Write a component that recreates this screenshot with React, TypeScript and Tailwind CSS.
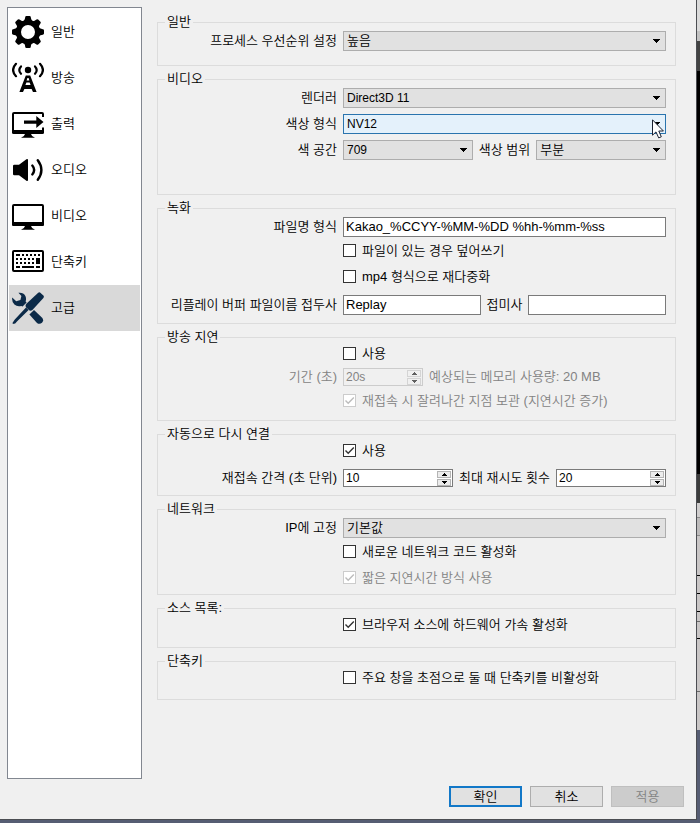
import { ReactNode, useId } from "react";

/* ---------- Icons ---------- */

const GEAR_ANGLES = [0, 45, 90, 135, 180, 225, 270, 315];

function GearIcon() {
  return (
    <svg viewBox="0 0 32 32" className="size-8 shrink-0">
      <circle cx="16" cy="16" r="9.6" fill="none" stroke="#000" strokeWidth="5.2" />
      {GEAR_ANGLES.map((angle) => (
        <path
          key={angle}
          d="M11.6 5.5 Q13 3.5 13.2 1.2 Q13.3 0 14.4 0 H17.6 Q18.7 0 18.8 1.2 Q19 3.5 20.4 5.5 Z"
          transform={`rotate(${angle} 16 16)`}
        />
      ))}
    </svg>
  );
}

function BroadcastIcon() {
  return (
    <svg viewBox="0 0 32 32" className="size-8 shrink-0">
      <circle cx="16" cy="8" r="3.2" />
      <g fill="none" stroke="#000" strokeWidth="2.2" strokeLinecap="round">
        <path d="M9 4.4 Q5.6 8 9 11.8 M23 4.4 Q26.4 8 23 11.8" />
        <path d="M4 1.8 Q-1.8 8 4 14.2 M28 1.8 Q33.8 8 28 14.2" />
      </g>
      <path
        fillRule="evenodd"
        d="M13.8 13.5 H18.2 L24.6 30 H21 L19.6 27 H12.4 L11 30 H7.4 Z M15.4 16 L14.6 18.6 H17.4 L16.6 16 Z M14.4 20.4 L13.4 23 H18.6 L17.6 20.4 Z"
      />
    </svg>
  );
}

function OutputIcon() {
  return (
    <svg viewBox="0 0 32 32" className="size-8 shrink-0">
      <path d="M31 9 V6 Q31 5 30 5 H2 Q1 5 1 6 V24 H31 V19.5" fill="none" stroke="#000" strokeWidth="2" />
      <path d="M0 22 H32 V24.5 Q32 26 30.5 26 H1.5 Q0 26 0 24.5 Z" />
      <path d="M13 26 H19 Q19.5 28.6 23 29.8 H9 Q12.5 28.6 13 26 Z" />
      <path d="M12 12.4 H24.3 V8 L31.5 14 L24.3 20 V15.8 H12 Z" />
    </svg>
  );
}

function AudioIcon() {
  return (
    <svg viewBox="0 0 32 32" className="size-8 shrink-0">
      <path d="M1 12 Q1 10.7 2.3 10.7 H7 L14.4 5.2 Q16 4.6 16 6 V26 Q16 27.4 14.4 26.8 L7 21.3 H2.3 Q1 21.3 1 20 Z" />
      <g fill="none" stroke="#000" strokeWidth="2.4" strokeLinecap="round">
        <path d="M20.3 11.6 Q24 16 20.3 20.4" />
        <path d="M25.8 6.2 Q33 16 25.8 25.8" />
      </g>
    </svg>
  );
}

function VideoIcon() {
  return (
    <svg viewBox="0 0 32 32" className="size-8 shrink-0">
      <rect x="1" y="5" width="30" height="20" rx="1" fill="none" stroke="#000" strokeWidth="2" />
      <path d="M0 22 H32 V24.5 Q32 26 30.5 26 H1.5 Q0 26 0 24.5 Z" />
      <path d="M13 26 H19 Q19.5 28.6 23 29.8 H9 Q12.5 28.6 13 26 Z" />
    </svg>
  );
}

function KeyboardIcon() {
  return (
    <svg viewBox="0 0 32 32" className="size-8 shrink-0">
      <rect x="1" y="5" width="30" height="20" rx="1" fill="none" stroke="#000" strokeWidth="2" />
      <path d="M4 8h4v2h-4z M10 8h2v2h-2z M14 8h2v2h-2z M18 8h2v2h-2z M22 8h2v2h-2z M26 8h2v2h-2z" />
      <path d="M4 12h2v2h-2z M8 12h2v2h-2z M12 12h2v2h-2z M16 12h2v2h-2z M20 12h2v2h-2z M24 12h4v6h-4z" />
      <path d="M4 16h2v2h-2z M8 16h2v2h-2z M12 16h2v2h-2z M16 16h2v2h-2z M20 16h2v2h-2z" />
      <path d="M4 20h4v2h-4z M10 20h12v2h-12z M24 20h4v2h-4z" />
    </svg>
  );
}

function ToolsIcon() {
  return (
    <svg viewBox="0 0 32 32" className="size-8 shrink-0" fill="#0b2a48">
      {/* destornillador */}
      <path d="M26.2 0.8 Q27.4 -0.2 28.6 0.9 L31.4 3.6 Q32.4 4.8 31.4 6 L20.4 18 Q18.4 19.4 16.6 17.8 L14.2 15.4 Q12.8 13.6 14.4 11.8 Z" />
      <path d="M14 15.4 L16.6 18 L5.2 29.2 L3.2 31.4 L0.8 32 L0.6 30.8 L2.8 27.6 Z" />
      {/* llave */}
      <path d="M6.4 0.8 Q11.4 0.2 13.4 4 Q14.6 6.6 13.6 9.4 L14.6 10.6 L10.6 14.6 L9.2 14 Q5.2 15 2.4 12.6 Q-0.4 10 0.2 5.6 L4.2 9.2 L8.4 8 L9.4 4 Z" />
      <path d="M17.4 22.6 L22 18 L30.4 26 Q32 28.6 30 30.8 Q27.6 32.8 25 31 Z" />
    </svg>
  );
}

/* ---------- Controls ---------- */

const TABS = [
  { label: "일반", icon: <GearIcon /> },
  { label: "방송", icon: <BroadcastIcon /> },
  { label: "출력", icon: <OutputIcon /> },
  { label: "오디오", icon: <AudioIcon /> },
  { label: "비디오", icon: <VideoIcon /> },
  { label: "단축키", icon: <KeyboardIcon /> },
  { label: "고급", icon: <ToolsIcon />, active: true },
];

function Group({ title, className, children }: { title: string; className: string; children: ReactNode }) {
  return (
    <fieldset className={`border border-[#dcdcdc] pt-px pr-[9px] ${className}`}>
      <legend className="ml-[7px] h-4 px-[2px] leading-4">{title}</legend>
      {children}
    </fieldset>
  );
}

interface RowProps {
  label?: string;
  htmlFor?: string;
  disabled?: boolean;
  children: ReactNode;
}

function Row({ label, htmlFor, disabled, children }: RowProps) {
  return (
    <div className="grid grid-cols-[179px_minmax(0,1fr)] items-center gap-x-[6px]">
      {label ? (
        <label htmlFor={htmlFor} className={`text-right whitespace-nowrap ${disabled ? "text-[#838383]" : ""}`}>
          {label}
        </label>
      ) : (
        <span />
      )}
      <div className="flex items-center gap-[6px]">{children}</div>
    </div>
  );
}

interface SelectProps {
  id: string;
  value: string;
  hot?: boolean;
  className?: string;
}

function Select({ id, value, hot, className = "" }: SelectProps) {
  return (
    <div className={`relative min-w-0 flex-1 ${className}`}>
      <select
        id={id}
        defaultValue={value}
        className={`block h-5 w-full appearance-none border pr-5 pb-px pl-[3px] leading-4 outline-none ${
          hot ? "border-[#2a74ae] bg-[#e4f1fb]" : "border-[#adadad] bg-[#e1e1e1]"
        }`}
      >
        <option>{value}</option>
      </select>
      <svg viewBox="0 0 7 4" className="pointer-events-none absolute top-2 right-[6px] h-1 w-[7px]">
        <path d="M0 0h7v1h-1v1h-1v1h-1v1h-1v-1h-1v-1h-1v-1h-1z" />
      </svg>
      {hot && (
        <svg viewBox="0 0 12 20" className="pointer-events-none absolute top-[5px] right-[2px] h-5 w-3">
          <path
            d="M0.5 0.8 V16.2 L4 12.9 L6.7 18.9 L9.3 17.8 L6.8 12 H11.4 Z"
            fill="#fff"
            stroke="#1a2030"
            strokeWidth="1"
          />
        </svg>
      )}
    </div>
  );
}

function TextInput({ id, value }: { id: string; value: string }) {
  return (
    <input
      id={id}
      type="text"
      defaultValue={value}
      className="h-5 w-full min-w-0 flex-1 border border-[#7a7a7a] bg-white px-[2px] pb-px leading-4 outline-none"
    />
  );
}

function SpinBox({ id, value, disabled, className }: { id: string; value: string; disabled?: boolean; className: string }) {
  const button = `flex h-[7px] items-center justify-center border ${
    disabled ? "border-[#d4d4d4] bg-[#f0f0f0]" : "border-[#b4b4b4] bg-[#ececec]"
  }`;
  const arrow = disabled ? "#606060" : "#000";

  return (
    <div
      className={`flex h-[18px] min-w-0 items-center border pr-px ${
        disabled ? "border-[#cccccc] bg-[#f0f0f0] text-[#838383]" : "border-[#7a7a7a] bg-white"
      } ${className}`}
    >
      <input
        id={id}
        type="text"
        defaultValue={value}
        disabled={disabled}
        className="h-4 w-full min-w-0 flex-1 bg-transparent px-[2px] text-xs leading-4 outline-none"
      />
      <div className="grid w-[14px] shrink-0 gap-px">
        <button type="button" aria-label="증가" disabled={disabled} className={button}>
          <svg viewBox="0 0 5 3" className="h-[3px] w-[5px]" fill={arrow}>
            <path d="M2 0h1v1h1v1h1v1h-5v-1h1v-1h1z" />
          </svg>
        </button>
        <button type="button" aria-label="감소" disabled={disabled} className={button}>
          <svg viewBox="0 0 5 3" className="h-[3px] w-[5px]" fill={arrow}>
            <path d="M0 0h5v1h-1v1h-1v1h-1v-1h-1v-1h-1z" />
          </svg>
        </button>
      </div>
    </div>
  );
}

interface CheckProps {
  label: string;
  checked?: boolean;
  disabled?: boolean;
  className?: string;
}

function Check({ label, checked, disabled, className = "h-[15px]" }: CheckProps) {
  const id = useId();
  return (
    <Row>
      <div className={className}>
        <div className="flex h-[15px] items-center gap-[6px]">
          <span className="relative block size-[13px] shrink-0">
            <input
              id={id}
              type="checkbox"
              defaultChecked={checked}
              disabled={disabled}
              className="peer block size-[13px] appearance-none border border-[#333333] bg-white disabled:border-[#cccccc]"
            />
            <svg
              viewBox="0 0 13 13"
              className="pointer-events-none absolute inset-0 hidden text-[#333333] peer-checked:block peer-disabled:text-[#bcbcbc]"
            >
              <path d="M2.5 6.5 L5.2 9.2 L10.8 3.4" fill="none" stroke="currentColor" strokeWidth="1.4" />
            </svg>
          </span>
          <label htmlFor={id} className={`whitespace-nowrap ${disabled ? "text-[#838383]" : ""}`}>
            {label}
          </label>
        </div>
      </div>
    </Row>
  );
}

/* Slice of the windows that sit behind the dialog */
function Backdrop() {
  return (
    <div className="flex w-[3px] shrink-0 flex-col">
      <div className="h-[31px] bg-[#dadada]" />
      <div className="h-[10px] bg-[#c2c2c2]" />
      <div className="h-[30px] bg-[#434343]" />
      <div className="h-[403px] bg-black" />
      <div className="h-[29px] bg-[#3c3c3c]" />
      <div className="h-[15px] border-b border-[#8a8a8a] bg-[#cfcdcd]" />
      <div className="h-[18px] border-b border-[#8a8a8a] bg-[#bdbbbb]" />
      <div className="h-[40px] border-b border-black bg-[#c9c6c6]" />
      <div className="h-[18px] border-b border-black bg-[#c9c6c6]" />
      <div className="h-[18px] border-b border-black bg-[#c9c6c6]" />
      <div className="h-[10px] border-b border-[#6a6a6a] bg-[#c9c6c6]" />
      <div className="h-[17px] border-b border-black bg-[#c9c6c6]" />
      <div className="h-[53px] border-b border-[#6a6a6a] bg-[#c9c6c6]" />
      <div className="h-[38px] bg-[#c9c6c6]" />
    </div>
  );
}

export default function App() {
  return (
    <div className="flex min-h-screen flex-col bg-[#565d73] pb-[3px] font-['Liberation_Sans','Noto_Sans_CJK_KR',sans-serif] text-[13px] leading-4 font-[350] text-black">
      <div className="flex flex-1">
        <main className="flex min-w-0 flex-1 flex-col border-r border-b border-[#4b4d52] bg-[#f0f0f0] pb-3">
          <div className="flex flex-1 pr-5">
            <nav className="mt-[7px] ml-[7px] w-[135px] shrink-0 border border-[#828790] bg-white p-px">
              {TABS.map((tab) => (
                <button
                  key={tab.label}
                  type="button"
                  className={`flex h-[46px] w-full items-center gap-[7px] pl-[3px] ${tab.active ? "bg-[#d9d9d9]" : ""}`}
                >
                  {tab.icon}
                  {tab.label}
                </button>
              ))}
            </nav>

            <form className="ml-[15px] flex min-w-0 flex-1 flex-col gap-[5px] pt-[14px]">
              <Group title="일반" className="pb-[14px]">
                <Row label="프로세스 우선순위 설정" htmlFor="priority">
                  <Select id="priority" value="높음" />
                </Row>
              </Group>

              <Group title="비디오" className="pb-[34px]">
                <div className="grid gap-[6px]">
                  <Row label="렌더러" htmlFor="renderer">
                    <Select id="renderer" value="Direct3D 11" className="text-xs" />
                  </Row>
                  <Row label="색상 형식" htmlFor="format">
                    <Select id="format" value="NV12" hot className="text-xs" />
                  </Row>
                  <Row label="색 공간" htmlFor="space">
                    <Select id="space" value="709" className="text-xs" />
                    <label htmlFor="range" className="whitespace-nowrap">색상 범위</label>
                    <Select id="range" value="부분" />
                  </Row>
                </div>
              </Group>

              <Group title="녹화" className="pb-2">
                <div className="grid gap-[6px]">
                  <Row label="파일명 형식" htmlFor="filename">
                    <TextInput id="filename" value="Kakao_%CCYY-%MM-%DD %hh-%mm-%ss" />
                  </Row>
                  <Check label="파일이 있는 경우 덮어쓰기" className="h-5" />
                  <Check label="mp4 형식으로 재다중화" className="h-5" />
                  <Row label="리플레이 버퍼 파일이름 접두사" htmlFor="prefix">
                    <TextInput id="prefix" value="Replay" />
                    <label htmlFor="suffix" className="whitespace-nowrap">접미사</label>
                    <TextInput id="suffix" value="" />
                  </Row>
                </div>
              </Group>

              <Group title="방송 지연" className="pb-3">
                <div className="grid gap-[7px]">
                  <Check label="사용" />
                  <Row label="기간 (초)" htmlFor="delay" disabled>
                    <SpinBox id="delay" value="20s" disabled className="w-20" />
                    <span className="whitespace-nowrap text-[#838383]">예상되는 메모리 사용량: 20 MB</span>
                  </Row>
                  <Check label="재접속 시 잘려나간 지점 보관 (지연시간 증가)" checked disabled />
                </div>
              </Group>

              <Group title="자동으로 다시 연결" className="pb-2">
                <div className="grid gap-[11px]">
                  <Check label="사용" checked />
                  <Row label="재접속 간격 (초 단위)" htmlFor="retry">
                    <SpinBox id="retry" value="10" className="flex-1" />
                    <label htmlFor="retries" className="whitespace-nowrap">최대 재시도 횟수</label>
                    <SpinBox id="retries" value="20" className="flex-1" />
                  </Row>
                </div>
              </Group>

              <Group title="네트워크" className="pb-1">
                <div className="grid gap-[6px]">
                  <Row label="IP에 고정" htmlFor="bind">
                    <Select id="bind" value="기본값" />
                  </Row>
                  <Check label="새로운 네트워크 코드 활성화" className="h-5" />
                  <Check label="짧은 지연시간 방식 사용" checked disabled className="h-5" />
                </div>
              </Group>

              <Group title="소스 목록:" className="pb-[15px]">
                <Check label="브라우저 소스에 하드웨어 가속 활성화" checked />
              </Group>

              <Group title="단축키" className="pb-[14px]">
                <Check label="주요 창을 초점으로 둘 때 단축키를 비활성화" />
              </Group>
            </form>
          </div>

          <footer className="mt-[7px] flex justify-end gap-2 pr-3">
            <button type="button" className="h-[21px] w-[73px] border-2 border-[#1278c8] bg-[#e1e1e1]">
              확인
            </button>
            <button type="button" className="h-[21px] w-[73px] border border-[#adadad] bg-[#e1e1e1]">
              취소
            </button>
            <button type="button" disabled className="h-[21px] w-[73px] border border-[#bfbfbf] bg-[#cccccc] text-[#838383]">
              적용
            </button>
          </footer>
        </main>
        <Backdrop />
      </div>
    </div>
  );
}
